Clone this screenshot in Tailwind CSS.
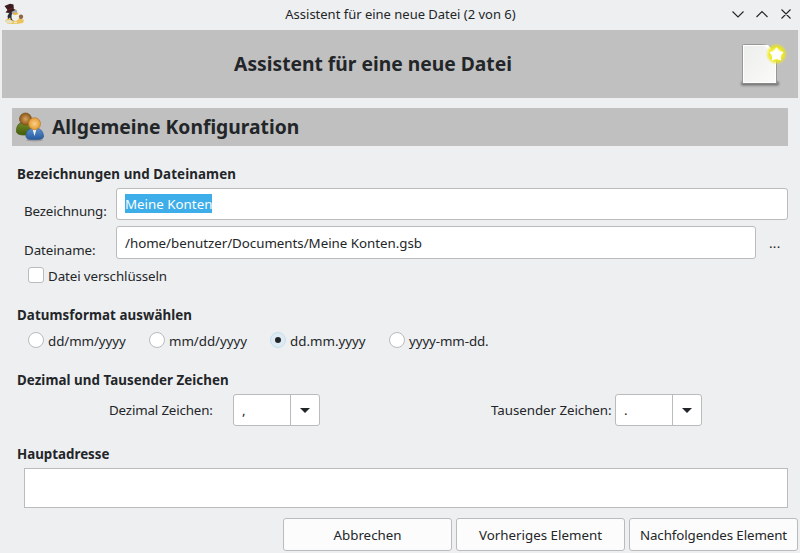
<!DOCTYPE html>
<html lang="de">
<head>
<meta charset="utf-8">
<title>Assistent für eine neue Datei</title>
<script src="https://cdn.jsdelivr.net/npm/@tailwindcss/browser@4"></script>
</head>
<body class="w-[800px] h-[553px] overflow-hidden bg-[#eeeff1] text-[#232629] font-['Noto_Sans',sans-serif] text-[13.33px] leading-5 whitespace-nowrap">
<div class="flex flex-col h-[553px]">
  <header class="h-[30px] shrink-0 flex items-center justify-between pl-[3px] pr-[6px]">
    <svg class="w-[88px] h-[24px] -mt-[1px]" viewBox="0 0 88 24">
      <path d="M2 18l3-3 4 1 8-1 4 2-1 3-6 1H5z" fill="#ecc35c"/>
      <ellipse cx="6" cy="18.800" rx="3.800" ry="1.800" fill="#e3e3c4"/>
      <path d="M4.500 13L7 8.500 12 7l2 5-2 6-4-1-1-2.500-2 1.500z" fill="#2a2d33"/>
      <path d="M8.500 14c0-4 2-6 4-6 2 1 3.500 3 3.500 6 0 2-2 4-4 4s-3.500-1.500-3.500-4z" fill="#f1f1ec"/>
      <circle cx="11.500" cy="9" r="2.800" fill="#a8adb5"/>
      <path d="M10.500 9.500l5 .5-1 1.500-3.500.5z" fill="#edb638"/>
      <path d="M1.500 3L7 .8l3.500.7.3 4.500 1.700 1L6 10l-3.500-.5 2-2.500z" fill="#3a1c1f"/>
      <path d="M4.500 7l6-2.200" stroke="#6b2022" stroke-width="1"/>
      <circle cx="18" cy="13.800" r="2.200" fill="#8a6848"/>
      <path d="M11 19.500h3" stroke="#f4ead0" stroke-width="1.500"/>
    </svg>
    <div class="text-[13px] w-[232px] -mt-[2px] ml-[6px] text-center tracking-[-0.01px]">Assistent für eine neue Datei (2 von 6)</div>
    <svg class="w-[64px] h-[16px] -mt-[2px] ml-[26px]" viewBox="0 0 64 16" fill="none" stroke="#232629" stroke-width="1.100">
      <path d="M2.500 5.500L8 11l5.500-5.500M26.500 11L32 5.500l5.500 5.500M51.500 3.500l9 9m0-9l-9 9"/>
    </svg>
  </header>
  <div class="mx-[2px] h-[68px] shrink-0 bg-[#c0c0c0] flex items-center">
    <h1 class="w-[742px] text-center text-[19.25px] font-bold leading-7">Assistent für eine neue Datei</h1>
    <svg class="w-[54px] h-[54px] shrink-0 -ml-[9px]" viewBox="0 0 54 54">
      <defs>
        <linearGradient id="paper" x1="0" y1="0" x2="1" y2="1"><stop stop-color="#eceeeb"/><stop offset="1" stop-color="#fbfbfa"/></linearGradient>
        <radialGradient id="glow"><stop stop-color="#fff"/><stop offset=".35" stop-color="#fffb9b"/><stop offset=".62" stop-color="#ece713" stop-opacity=".95"/><stop offset="1" stop-color="#eee813" stop-opacity="0"/></radialGradient>
        <filter id="soft" x="-20%" y="-200%" width="140%" height="500%"><feGaussianBlur stdDeviation="1.300"/></filter>
      </defs>
      <rect x="6" y="44.500" width="38" height="4" rx="1.500" fill="#333" opacity=".55" filter="url(#soft)"/>
      <path d="M7.500 8.500q0-1 1-1h20c7 1 13 7 13 13v26h-34z" fill="url(#paper)" stroke="#969995"/>
      <path d="M8.500 8.500h20c6 1 12 6 12 12v25h-32z" fill="none" stroke="#fff"/>
      <path d="M7.500 46.500h34" stroke="#858884"/>
      <path d="M28 8c5 2 5 5 4 9 3-1 7 0 9 4v-5l-8-8z" fill="#fff"/>
      <circle cx="41.500" cy="17" r="11" fill="url(#glow)"/>
      <path d="M41.500 11.200l2 3.700 4.100.7-2.900 3 .7 4.100-3.900-1.900-3.900 1.900.7-4.100-2.900-3 4.100-.7z" fill="#fff" stroke="#fff" stroke-width="1.500" stroke-linejoin="round"/>
    </svg>
  </div>
  <div class="mt-[10px] mx-[12px] h-[38px] shrink-0 bg-[#c0c0c0] flex items-center pl-[4px]">
    <svg class="w-[28px] h-[32px] shrink-0" viewBox="0 0 28 32">
      <defs>
        <radialGradient id="brown"><stop stop-color="#d6a361"/><stop offset="1" stop-color="#8c5718"/></radialGradient>
        <radialGradient id="orange"><stop stop-color="#fbd18a"/><stop offset="1" stop-color="#e49a31"/></radialGradient>
        <linearGradient id="green" x2="0" y2="1"><stop stop-color="#76892a"/><stop offset="1" stop-color="#425e08"/></linearGradient>
        <linearGradient id="blue" x2="0" y2="1"><stop stop-color="#5d91cb"/><stop offset="1" stop-color="#285b9e"/></linearGradient>
      </defs>
      <ellipse cx="18.500" cy="29" rx="8.500" ry="1.500" fill="#555" opacity=".35"/>
      <path d="M.5 20c0-6 3-9 8-9s9 3 9 9c0 3-4 4-9 4s-8-1-8-4z" fill="url(#green)" stroke="#48600f" stroke-width=".8"/>
      <circle cx="9.500" cy="8" r="6" fill="url(#brown)" stroke="#775019" stroke-width=".7"/>
      <path d="M10 25c0-5 3-8 8.500-8s8.500 3 9 8c.2 3-3 3.500-9 3.500S10 28 10 25z" fill="url(#blue)" stroke="#315d95" stroke-width=".8"/>
      <path d="M16.500 18l2 7 2-7z" fill="#f1f5f8"/>
      <circle cx="18.500" cy="12.700" r="6" fill="url(#orange)" stroke="#b97824" stroke-width=".7"/>
    </svg>
    <h2 class="ml-[8px] text-[19.28px] font-bold leading-7">Allgemeine Konfiguration</h2>
  </div>
  <main class="pl-[17px] pr-[12px] flex flex-col shrink-0">
    <h3 class="mt-[18px] h-[20px] font-bold tracking-[0.1px]">Bezeichnungen und Dateinamen</h3>
    <div class="mt-[4px] h-[32px] flex pl-[7px]">
      <label class="w-[92px] pt-[13px] tracking-[-0.15px]">Bezeichnung:</label>
      <div class="flex-1 border border-[#b9bbbd] rounded-[3px] bg-white flex items-center pl-[8px]"><span class="bg-[#3daee9] text-[#fcfcfc] h-[19px] leading-[21px] -mt-px">Meine Konten</span></div>
    </div>
    <div class="mt-[6px] h-[33px] flex pl-[7px]">
      <label class="w-[92px] pt-[14px] tracking-[-0.08px]">Dateiname:</label>
      <div class="w-[640px] border border-[#b9bbbd] rounded-[3px] bg-white flex items-center pl-[8px] tracking-[-0.025px]">/home/benutzer/Documents/Meine Konten.gsb</div>
      <span class="ml-[13px] pt-[7px] tracking-[0.3px]">...</span>
    </div>
    <div class="mt-[8px] h-[16px] flex items-center pl-[11px] gap-[4px]"><i class="w-[16px] h-[16px] border border-[#b9bbbd] rounded-[3px] bg-white"></i><span class="mt-[2px] tracking-[-0.1px]">Datei verschlüsseln</span></div>
    <h3 class="mt-[22px] h-[20px] font-bold tracking-[0.07px]">Datumsformat auswählen</h3>
    <div class="mt-[7px] h-[16px] flex items-center pl-[11px]">
      <div class="w-[121px] flex items-center gap-[4px]"><i class="w-[16px] h-[16px] border border-[#b9bbbd] rounded-full bg-white"></i><span class="mt-[2px] tracking-[-0.07px]">dd/mm/yyyy</span></div>
      <div class="w-[121px] flex items-center gap-[4px]"><i class="w-[16px] h-[16px] border border-[#b9bbbd] rounded-full bg-white"></i><span class="mt-[2px] tracking-[-0.05px]">mm/dd/yyyy</span></div>
      <div class="w-[119px] flex items-center gap-[4px]"><i class="w-[16px] h-[16px] border border-[#c2dff0] rounded-full bg-[#deebf3] flex items-center justify-center"><b class="w-[6px] h-[6px] rounded-full bg-[#232629]"></b></i><span class="mt-[2px]">dd.mm.yyyy</span></div>
      <div class="flex items-center gap-[4px]"><i class="w-[16px] h-[16px] border border-[#b9bbbd] rounded-full bg-white"></i><span class="mt-[2px] tracking-[-0.1px]">yyyy-mm-dd.</span></div>
    </div>
    <h3 class="mt-[22px] h-[20px] font-bold tracking-[0.06px]">Dezimal und Tausender Zeichen</h3>
    <div class="mt-[4px] h-[32px] flex items-center">
      <label class="ml-[92px] w-[124px] tracking-[-0.16px]">Dezimal Zeichen:</label>
      <div class="w-[87px] h-[32px] flex border border-[#b9bbbd] rounded-[3px] bg-white">
        <span class="w-[56px] pl-[8px] pt-[5px]">,</span>
        <span class="flex-1 border-l border-[#b9bbbd] flex items-center justify-center"><svg class="w-[10px] h-[5px]" viewBox="0 0 10 5"><path d="M0 0h10L5 5z" fill="#232629"/></svg></span>
      </div>
      <label class="ml-[171px] w-[124px] tracking-[-0.05px]">Tausender Zeichen:</label>
      <div class="w-[87px] h-[32px] flex border border-[#b9bbbd] rounded-[3px] bg-white">
        <span class="w-[56px] pl-[8px] pt-[5px]">.</span>
        <span class="flex-1 border-l border-[#b9bbbd] flex items-center justify-center"><svg class="w-[10px] h-[5px]" viewBox="0 0 10 5"><path d="M0 0h10L5 5z" fill="#232629"/></svg></span>
      </div>
    </div>
    <h3 class="mt-[18px] h-[20px] font-bold">Hauptadresse</h3>
    <div class="mt-[4px] ml-[7px] h-[40px] border border-[#b9bbbd] bg-white"></div>
  </main>
  <footer class="mt-[10px] pr-[2px] h-[33px] flex justify-end gap-[4px]">
    <button class="w-[169px] border border-[#b9bbbd] rounded-[3px] bg-[#fcfcfc]">Abbrechen</button>
    <button class="w-[169px] border border-[#b9bbbd] rounded-[3px] bg-[#fcfcfc]">Vorheriges Element</button>
    <button class="w-[169px] border border-[#b9bbbd] rounded-[3px] bg-[#fcfcfc] tracking-[-0.1px]">Nachfolgendes Element</button>
  </footer>
</div>
</body>
</html>
